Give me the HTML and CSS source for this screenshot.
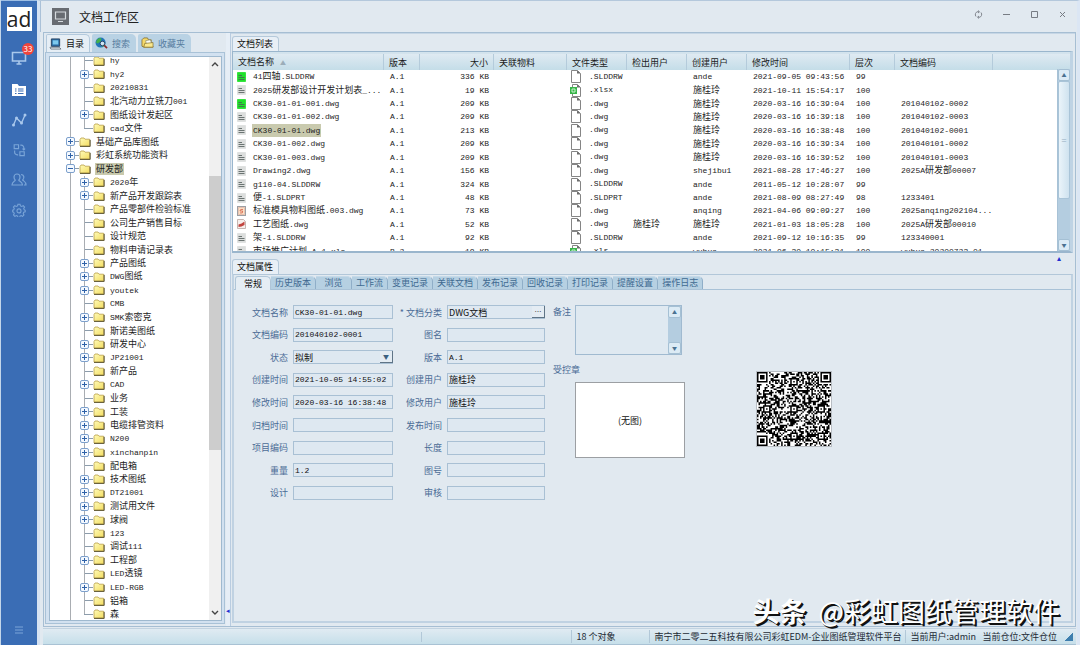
FILE: index.html
```html
<!DOCTYPE html>
<html lang="zh-CN">
<head>
<meta charset="utf-8">
<title>文档工作区</title>
<link rel="stylesheet" href="styles.css">
</head>
<body>
<svg class="defs" aria-hidden="true">
  <defs>
    <linearGradient id="g-folder" x1="0" y1="0" x2="1" y2="1"><stop offset="0" stop-color="#fffbb8"/><stop offset="1" stop-color="#f3dd62"/></linearGradient>
    <symbol id="i-folder" viewBox="0 0 12 10"><path d="M1 9V2.5L2 1h3l1 1.200h4.500V9z" fill="url(#g-folder)" stroke="#b9a04a" stroke-width=".8"/><path d="M1 9.400h10.200V2.800" fill="none" stroke="#5c5430" stroke-width="1"/></symbol>
    <symbol id="i-doc" viewBox="0 0 9 10"><path d="M.5.5h8v9h-8z" fill="currentColor" stroke="currentColor" stroke-width=".8"/><path d="M1.500 3.500h3.500M1.500 5.500h6M1.500 7.500h6" stroke="#4f5a58" stroke-width="1" opacity=".8"/></symbol>
    <symbol id="i-red" viewBox="0 0 9 10"><path d="M.5.500h6l2 2v7h-8z" fill="#f7efec" stroke="#b9a5a0" stroke-width=".8"/><path d="M1.500 5.500l3-1 3-2v3.500l-3 1.500-3 .5z" fill="#c2453f"/></symbol>
    <symbol id="i-stamp" viewBox="0 0 9 10"><path d="M.5.500h8v9h-8z" fill="#fbe3c8" stroke="#d9a28c" stroke-width=".8"/><path d="M6.500 3h-3L2.500 5h3.500l-.5 2.500h-3" fill="none" stroke="#d5573f"/></symbol>
    <symbol id="i-file" viewBox="0 0 11 13"><path d="M1.500.500h6l3 3v9h-9z" fill="#fff" stroke="#858585"/><path d="M7 .5v3h3.500z" fill="#6b6b6b"/></symbol>
    <symbol id="i-xls" viewBox="0 0 11 13"><path d="M2.500.500h5l3 3v9h-8z" fill="#fff" stroke="#858585"/><path d="M7 .5v3h3.500z" fill="#6b6b6b"/><path d="M0 3h7v7H0z" fill="#39b54a"/><path d="M2 5h3v3H2z" fill="none" stroke="#c9f3cd"/></symbol>
  </defs>
</svg>

<div class="app">
  <nav class="rail" aria-label="主导航">
    <div class="logo">ad</div>
    <button class="rail-btn bright" aria-label="消息">
      <svg viewBox="0 0 16 16" width="16" height="16"><path d="M1.500 2.500h13v8.500h-13zM5.500 14h5M8 11v3" fill="none" stroke="currentColor" stroke-width="1.600"/></svg>
      <span class="badge">33</span>
    </button>
    <button class="rail-btn active" aria-label="文档">
      <svg viewBox="0 0 16 16" width="16" height="16"><path d="M1 2h5.500l1.500 2h7v10H1z" fill="currentColor"/><path d="M4 7h1.500M7 7h5.500M4 9h1.500M7 9h5.500M4 11.500h1.500M7 11.500h5.500" stroke="#3a6db5" stroke-width="1.100"/></svg>
    </button>
    <button class="rail-btn bright" aria-label="统计">
      <svg viewBox="0 0 16 16" width="16" height="16"><path d="M2.500 13L5.500 6l5 5L14 3" fill="none" stroke="currentColor" stroke-width="1.300"/><g fill="currentColor"><circle cx="2.500" cy="13" r="1.500"/><circle cx="5.500" cy="6" r="1.500"/><circle cx="10.500" cy="11" r="1.500"/><circle cx="14" cy="3" r="1.500"/></g></svg>
    </button>
    <button class="rail-btn" aria-label="流程">
      <svg viewBox="0 0 16 16" width="14" height="14"><path d="M2.500 2h5v4.500h-5zM9 10h5v4.500H9zM9.500 2.500h1A3 3 0 0 1 13.500 6v2M12 6.500l1.500 1.500L15 6.500M7 13.500H6A3 3 0 0 1 3 10V8.500" fill="none" stroke="currentColor" stroke-width="1.300"/></svg>
    </button>
    <button class="rail-btn" aria-label="用户">
      <svg viewBox="0 0 16 16" width="16" height="16"><path d="M6 2a3 3 0 0 1 3 3c0 1.500-.6 2.500-1.200 3.200.5 1.200 3.700 1.500 3.700 4.800H1c0-3.300 3-3.600 3.300-4.800C3.600 7.500 3 6.500 3 5a3 3 0 0 1 3-3zM10 2.500c3 0 3.800 3.500 1.700 5.500 1 1.200 3.300 1.500 3.300 5h-2" fill="none" stroke="currentColor" stroke-width="1.200"/></svg>
    </button>
    <button class="rail-btn" aria-label="设置">
      <svg viewBox="0 0 16 16" width="14" height="14"><path d="M6.800 1.500h2.400l.4 1.800 1.600.7 1.600-1 1.600 1.700-1 1.500.6 1.600 1.100.5v1.800l-1.700.5-.6 1.500.9 1.600-1.700 1.600-1.500-1-1.300.7-.4 1.500H6.800l-.4-1.500-1.500-.7-1.600 1-1.600-1.600.9-1.600-.6-1.500-1.200-.5V8.200l1.200-.5.6-1.600-1-1.500L3.200 3l1.600 1 1.600-.7z" fill="none" stroke="currentColor" stroke-width="1.200"/><circle cx="8" cy="9" r="2.300" fill="none" stroke="currentColor" stroke-width="1.200"/></svg>
    </button>
    <button class="rail-btn last" aria-label="菜单">
      <svg viewBox="0 0 8 8" width="8" height="8"><path d="M0 1h8M0 4h8M0 7h8" stroke="currentColor"/></svg>
    </button>
  </nav>

  <div class="window">
    <header class="titlebar">
      <svg viewBox="0 0 17 17" width="17" height="17"><path d="M0 0h17v17H0z" fill="#686c72"/><path d="M3.500 4h10v7h-10zM6 13.500h5" fill="none" stroke="#d5dade" stroke-width="1.200"/></svg>
      <h1>文档工作区</h1>
      <div class="winbtns">
        <button aria-label="刷新"><svg viewBox="0 0 9 9" width="9" height="9"><path d="M2 6.500A3 3 0 0 1 4 1.600L5 2M7 2.500A3 3 0 0 1 5 7.400L4 7M4 .5l1.500 1.300L4 3M5 6L3.500 7.200 5 8.500" fill="none" stroke="currentColor" stroke-width=".9"/></svg></button>
        <button aria-label="最小化"><svg viewBox="0 0 9 9" width="9" height="9"><path d="M1 4.500h7" stroke="currentColor"/></svg></button>
        <button aria-label="最大化"><svg viewBox="0 0 9 9" width="9" height="9"><path d="M1.500 1.500h6v6h-6z" fill="none" stroke="currentColor"/></svg></button>
        <button aria-label="关闭"><svg viewBox="0 0 9 9" width="9" height="9"><path d="M2 2l5 5M7 2L2 7" stroke="currentColor"/></svg></button>
      </div>
    </header>

    <main class="workspace">
      <section class="browser">
        <div class="side-tabs" role="tablist">
          <button class="side-tab on" role="tab" aria-selected="true"><svg viewBox="0 0 14 13" width="13" height="12"><path d="M2.500 1h9v8h-9z" fill="#2b6fa8" stroke="#24405f"/><path d="M4 2.500h6v4.500H4z" fill="#7cc9ee"/><path d="M1 10h10l2 2H2z" fill="#e9edf2" stroke="#53606e" stroke-width=".8"/></svg>目录</button>
          <button class="side-tab" role="tab" aria-selected="false"><svg viewBox="0 0 14 13" width="13" height="12"><circle cx="6" cy="6" r="5.500" fill="#2277b8"/><path d="M2 3q3-3 5-1L6 5 3 7 1 6zM7 8l3-2 1 2-3 3z" fill="#43b04b"/><circle cx="8" cy="7" r="2.500" fill="#cfe6f6" stroke="#24405f"/><path d="M10 9l3 3" stroke="#8c2a2a" stroke-width="1.800"/></svg>搜索</button>
          <button class="side-tab" role="tab" aria-selected="false"><svg viewBox="0 0 14 13" width="13" height="12"><path d="M1 10V3l2-2h4l1 2h3v2l2 6H3z" fill="#f5d96a" stroke="#7a6426" stroke-width=".8"/><path d="M5 4l5-1 2 5-6 1z" fill="#fdfdf3" stroke="#8b8b70" stroke-width=".7"/><path d="M3 11l1-4 9-1v5z" fill="#fbe98d" stroke="#7a6426" stroke-width=".7"/></svg>收藏夹</button>
        </div>
        <div class="tree-frame">
          <div class="tree-box">
            <ul class="tree" id="tree"></ul>
            <div class="tree-scroll">
              <svg viewBox="0 0 8 6" width="8" height="6"><path d="M1 5l3-3 3 3" fill="none" stroke="#444" stroke-width="1.400"/></svg>
              <div class="tree-thumb"></div>
              <svg viewBox="0 0 8 6" width="8" height="6"><path d="M1 1l3 3 3-3" fill="none" stroke="#444" stroke-width="1.400"/></svg>
            </div>
          </div>
        </div>
      </section>

      <div class="splitter"><span>◂</span></div>

      <div class="content">
        <section class="panel">
          <h2 class="panel-tab">文档列表</h2>
          <div class="list-frame">
            <table class="docs">
              <colgroup>
                <col class="c-name"><col class="c-ver"><col class="c-size"><col class="c-rel"><col class="c-user"><col class="c-user"><col class="c-user"><col class="c-time"><col class="c-lvl"><col class="c-code"><col>
              </colgroup>
              <thead>
                <tr><th>文档名称<span class="sort">▲</span></th><th>版本</th><th class="num">大小</th><th>关联物料</th><th>文件类型</th><th>检出用户</th><th>创建用户</th><th>修改时间</th><th>层次</th><th>文档编码</th><th></th></tr>
              </thead>
              <tbody id="docs"></tbody>
            </table>
            <div class="vscroll">
              <button aria-label="向上">▲</button>
              <div class="vthumb">=</div>
              <button aria-label="向下">▼</button>
            </div>
          </div>
        </section>

        <div class="hsplit"><span>▴</span></div>

        <section class="panel grow">
          <h2 class="panel-tab">文档属性</h2>
          <div class="props">
            <div class="prop-tabs" role="tablist">
              <button class="on" role="tab" aria-selected="true">常规</button><button role="tab">历史版本</button><button role="tab">浏览</button><button role="tab">工作流</button><button role="tab">变更记录</button><button role="tab">关联文档</button><button role="tab">发布记录</button><button role="tab">回收记录</button><button role="tab">打印记录</button><button role="tab">提醒设置</button><button role="tab">操作日志</button>
            </div>
            <form class="prop-body">
              <div class="fields">
                <label for="f1">文档名称</label><input id="f1" class="mono" value="CK30-01-01.dwg">
                <label for="f2">* 文档分类</label><div class="combo"><input id="f2" value="DWG文档"><button type="button" aria-label="选择分类">…</button></div>
                <label for="f3">文档编码</label><input id="f3" class="mono" value="201040102-0001">
                <label for="f4">图名</label><input id="f4">
                <label for="f5">状态</label><div class="combo"><select id="f5"><option>拟制</option></select><span class="drop" aria-hidden="true">▼</span></div>
                <label for="f6">版本</label><input id="f6" class="mono" value="A.1">
                <label for="f7">创建时间</label><input id="f7" class="mono" value="2021-10-05 14:55:02">
                <label for="f8">创建用户</label><input id="f8" value="施桂玲">
                <label for="f9">修改时间</label><input id="f9" class="mono" value="2020-03-16 16:38:48">
                <label for="f10">修改用户</label><input id="f10" value="施桂玲">
                <label for="f11">归档时间</label><input id="f11">
                <label for="f12">发布时间</label><input id="f12">
                <label for="f13">项目编码</label><input id="f13">
                <label for="f14">长度</label><input id="f14">
                <label for="f15">重量</label><input id="f15" class="mono" value="1.2">
                <label for="f16">图号</label><input id="f16">
                <label for="f17">设计</label><input id="f17">
                <label for="f18">审核</label><input id="f18">
              </div>
              <div class="notes">
                <label for="memo">备注</label>
                <div class="memo"><textarea id="memo"></textarea><div class="memo-scroll"><button type="button" aria-label="向上">▲</button><button type="button" aria-label="向下">▼</button></div></div>
                <span class="stamp-label">受控章</span>
                <div class="stamp">(无图)</div>
              </div>
              <svg class="qr" id="qr" viewBox="0 0 49 49" role="img" aria-label="二维码"></svg>
            </form>
          </div>
        </section>
      </div>
    </main>

    <footer class="status">
      <span class="s-blank"></span>
      <span class="s-count">18 个对象</span>
      <span class="s-company">南宁市二零二五科技有限公司彩虹EDM-企业图纸管理软件平台</span>
      <span class="s-user">当前用户:admin</span>
      <span class="s-store">当前仓位:文件仓位</span>
      <i class="grip"></i>
    </footer>
  </div>
  <div class="watermark"><b>头条</b>@彩虹图纸管理软件</div>
</div>
<script src="app.js"></script>
</body>
</html>
```
FILE: styles.css
```css
* { box-sizing: border-box; }
body { margin: 0; font: 9px/13px "Noto Sans CJK SC", "Liberation Sans", sans-serif; color: #1c1c1c; background: #e1e9f0; }
button, input, select, textarea { font: inherit; color: inherit; margin: 0; padding: 0; border: 0; background: none; border-radius: 0; }
h1, h2, ul { margin: 0; padding: 0; font-weight: 400; }
.defs { position: absolute; width: 0; height: 0; }
.mono { font-family: "Liberation Mono", "Noto Sans CJK SC", monospace; font-size: 8px; }

.app { position: relative; display: flex; height: 100vh; min-height: 640px; border-left: 1px solid #c3d6ea; overflow: hidden; }

/* left rail */
.rail { display: flex; flex-direction: column; align-items: center; flex: 0 0 36px; background: #3a6db5; padding: 6px 0 9px; color: #7aa5d8; border-top: 1px solid #9fbfe4; }
.logo { width: 25px; height: 24px; background: #fff; color: #222; font: 21px/25px "Open Sans", "Noto Sans", sans-serif; text-align: center; margin-bottom: 12px; }
.rail-btn { position: relative; display: flex; align-items: center; justify-content: center; width: 30px; height: 30px; color: inherit; }
.rail-btn.bright { color: #a9c8ec; }
.rail-btn.active { color: #fff; margin-top: 2px; }
.rail-btn.bright + .rail-btn { margin-bottom: 0; }
.rail-btn.last { margin-top: auto; height: 12px; }
.badge { position: absolute; right: 0; top: 0; width: 12px; height: 12px; border-radius: 6px; background: #f0443c; color: #fff; font-size: 8px; line-height: 12px; text-align: center; }

.window { flex: 1; display: flex; flex-direction: column; min-width: 0; border-left: 3px solid #d5e2f2; border-right: 3px solid #dbe6f4; border-top: 1px solid #b4c8dc; }
.titlebar { display: flex; align-items: center; gap: 10px; height: 31px; flex: none; padding: 0 10px 0 11px; border-left: 1px solid #aac1d8; }
.titlebar h1 { font-size: 12px; line-height: 18px; color: #222; }
.winbtns { display: flex; gap: 19px; margin-left: auto; color: #777c84; padding-bottom: 4px; }
.winbtns button { display: flex; }

.workspace { flex: 1; min-height: 0; display: flex; margin: 0 1px 0 3px; border: 1px solid #a6bed3; }

/* folder browser */
.browser { flex: 0 0 182px; display: flex; flex-direction: column; padding: 1px 1px 2px 1px; }
.side-tabs { display: flex; gap: 2px; padding-left: 1px; height: 18px; }
.side-tab { display: flex; align-items: center; gap: 4px; padding: 0 6px 0 3px; border-radius: 2px 5px 0 0; background: #b9d2e4; color: #567c9e; }
.side-tab.on { background: #e6eef5; color: #111; border: 1px solid #b3c9dc; border-bottom: 0; padding: 0 5px 0 2px; }
.tree-frame { flex: 1; min-height: 0; border: 1px solid #a9c2d7; background: #d2e1f0; padding: 3px 2px 2px 3px; display: flex; }
.tree-box { flex: 1; display: flex; overflow: hidden; background: #fff; border: 1px solid #9fb9cf; }
.tree { flex: 1; margin: -3px 0 -1px; list-style: none; display: grid; grid-auto-rows: 1fr; background: linear-gradient(#a9adb2, #a9adb2) 20px 0 / 1px 100% no-repeat; }
.tree li { position: relative; display: flex; align-items: center; gap: 4px; padding-left: 29px; white-space: nowrap; min-height: 0; }
.tree li.root { padding-left: 15px; }
.tree li::before { content: ""; width: 9px; height: 1px; background: #8c9cab; flex: none; margin-left: 5px; margin-right: -4px; }
.tree li::after { content: ""; position: absolute; left: 34px; top: 0; bottom: 0; width: 1px; background: #a9adb2; }
.tree li.root::after { display: none; }
.tree li.end::after { bottom: 50%; }
.tree li svg { width: 12px; height: 10px; flex: none; }
.tree i { position: absolute; z-index: 1; left: 30px; top: 2px; width: 9px; height: 9px; border: 1px solid #7da0cc; border-radius: 2px; background: linear-gradient(#2f62a8, #2f62a8) 50% 50% / 5px 1px no-repeat, linear-gradient(#2f62a8, #2f62a8) 50% 50% / 1px 5px no-repeat, #f4f9ff; }
.tree li.root i { left: 16px; }
.tree i.open { background: linear-gradient(#2f62a8, #2f62a8) 50% 50% / 5px 1px no-repeat, #f4f9ff; }
.tree b, .docs b { font-weight: 400; padding: 0 1px; line-height: 12px; }
.tree b.sel, .docs b.sel { background: #c9caae; }
.tree-scroll { flex: 0 0 12px; background: #f0f0f0; display: flex; flex-direction: column; align-items: center; padding: 4px 0; }
.tree-scroll::before { content: ""; order: 1; height: 109px; flex: none; }
.tree-thumb { order: 2; width: 12px; flex: 0 0 274px; background: #cdcdcd; }
.tree-scroll svg:last-child { order: 3; margin-top: auto; }

.splitter { flex: 0 0 5px; display: flex; align-items: flex-end; padding-bottom: 11px; color: #1f2fd0; border-right: 1px solid #b9cce0; background: #e6eef6; }
.splitter span { font-size: 7px; line-height: 10px; }

/* right column */
.content { flex: 1; min-width: 0; display: flex; flex-direction: column; padding: 2px 2px 2px 1px; border-top: 1px solid #c6d6e5; }
.panel { display: flex; flex-direction: column; }
.grow { flex: 1; min-height: 0; }
.panel-tab { align-self: flex-start; font-size: 9px; line-height: 14px; padding: 0 5px 0 4px; color: #111; background: #e8eff6; border: 1px solid #b5c9da; border-bottom: 0; border-radius: 3px 4px 0 0; }
.list-frame { position: relative; height: 202px; overflow: hidden; border: 1px solid #9ab6cd; border-right-width: 3px; border-right-color: #bfd3e4; border-bottom: 2px solid #9ab6cd; background: #d3e3ed; padding-top: 2px; }
.docs { width: 100%; height: 204px; border-collapse: separate; border-spacing: 0; table-layout: fixed; background: #fff; }
.c-name { width: 151px; } .c-ver { width: 36px; } .c-size { width: 74px; } .c-rel { width: 73px; } .c-user { width: 60px; } .c-time { width: 103px; } .c-lvl { width: 45px; } .c-code { width: 98px; }
.docs th { height: 15px; padding: 0 0 0 5px; text-align: left; font-weight: 400; line-height: 15px; white-space: nowrap; background: linear-gradient(#dfeaf2, #c4dde8); border-right: 1px solid #b4cbdb; overflow: hidden; }
.docs th:last-child { border: 0; }
.docs th.num, .docs td.num { text-align: right; padding-right: 5px; }
.docs td { padding: 0 0 0 6px; line-height: 12px; white-space: nowrap; overflow: hidden; vertical-align: middle; }
.docs tr > td:nth-child(5) { padding-left: 3px; }
.sort { font-size: 6px; color: #9badb9; margin-left: 6px; }
.cell { display: flex; align-items: center; height: 12px; gap: 6px; }
.cell svg { width: 9px; height: 10px; flex: none; color: #dcdedd; margin-left: -2px; }
.cell svg.green { color: #20e02b; }
.cell.type { gap: 8px; }
.cell.type svg { width: 11px; height: 13px; margin-left: 0; }
.vscroll { position: absolute; right: 0; top: 17px; bottom: 0; width: 13px; display: flex; flex-direction: column; background: #b4cde0; border-left: 1px solid #a8c2d6; }
.vscroll button, .memo-scroll button { height: 12px; flex: none; font-size: 5px; line-height: 10px; color: #4b7291; background: #dcebf5; border: 1px solid #a5c0d4; border-radius: 2px; text-align: center; }
.vscroll button:last-child { margin-top: auto; }
.vthumb { flex: 0 0 118px; display: flex; align-items: center; justify-content: center; background: linear-gradient(90deg, #eaf4fa, #cfe2ef); border: 1px solid #a9c4d8; color: #92acc0; border-radius: 2px; }

.hsplit { height: 6px; flex: none; display: flex; justify-content: flex-end; padding-right: 12px; color: #1f2fd0; }
.hsplit span { font-size: 8px; line-height: 9px; }

/* properties */
.props { flex: 1; display: flex; flex-direction: column; min-height: 0; border: 2px solid #c0d2e2; border-top: 1px solid #b2c7d9; margin-bottom: 1px; }
.prop-tabs { display: flex; height: 15px; padding: 1px 0 0 1px; border-bottom: 1px solid #a9c2d7; }
.prop-tabs button { min-width: 36px; padding: 0 4px; line-height: 12px; height: 13px; background: #b6d0e2; color: #3f6a91; border-right: 1px solid #8faec8; border-top: 1px solid #c5d9e8; border-radius: 0 5px 0 0; }
.prop-tabs button.on { background: #e5edf4; color: #111; height: 14px; border: 1px solid #b0c6d8; border-bottom: 0; border-radius: 3px 5px 0 0; }
.prop-body { display: flex; align-items: flex-start; padding: 11px 8px 0 0; color: #4b6c96; background: #e1e9f0; flex: 1; }
.fields { display: grid; grid-template-columns: 54px 100px 44px 98px; column-gap: 5px; grid-auto-rows: 1fr; height: 203px; align-items: center; justify-items: end; }
.fields label { white-space: nowrap; }
.fields input, .fields select { width: 100%; height: 14px; padding: 0 1px; border: 1px solid #a9c0d4; background: #dee8f1; color: #111; }
.combo { width: 100%; display: flex; position: relative; }
.fields select { appearance: none; }
.combo button, .drop { position: absolute; right: 0; top: 1px; width: 13px; height: 12px; background: #e4ecf3; border-right: 1px solid #5f7486; border-bottom: 1px solid #5f7486; color: #333; font-size: 7px; line-height: 9px; text-align: center; pointer-events: none; }
.drop { font-size: 6px; line-height: 11px; color: #3c6080; }
.notes { display: grid; grid-template-columns: 18px 110px; column-gap: 4px; margin-left: 8px; margin-top: 4px; align-items: start; white-space: nowrap; }
.memo { display: flex; width: 107px; height: 50px; border: 1px solid #a0bad0; background: #dfe9f1; }
.memo textarea { flex: 1; width: 0; resize: none; outline: 0; }
.memo-scroll { width: 13px; background: #b4cde0; display: flex; flex-direction: column; justify-content: space-between; }
.stamp-label { grid-column: 1 / 3; margin-top: 8px; margin-bottom: 6px; }
.stamp { grid-column: 2; height: 76px; display: flex; align-items: center; justify-content: center; background: #fff; border: 1px solid #9c9fa3; color: #111; }
.qr { width: 76px; height: 76px; margin: 70px 0 0 71px; background: #fff; border: 1px solid #b9bec4; flex: none; }

.status { flex: none; height: 17px; margin: 1px 1px 0 3px; display: flex; align-items: center; background: linear-gradient(#e0ebf2, #c6dfea); border-top: 1px solid #c2d3e1; border-bottom: 1px solid #a9c2d4; white-space: nowrap; color: #1d2a35; }
.status span { border-left: 1px solid #b2c8d8; padding-left: 4px; }
.status .s-blank { flex: 1; max-width: 150px; margin-left: auto; height: 10px; }
.status .s-count { width: 78px; }
.status .s-company { width: 256px; }
.status .s-user { width: 77px; }
.status .s-store { border: 0; padding: 0 8px 0 0; }
.grip { width: 8px; height: 8px; margin-right: 3px; background: linear-gradient(135deg, transparent 50%, #3f7fae 50%); }

.watermark { position: absolute; right: 20px; bottom: 15px; font-size: 27px; line-height: 38px; color: #fff; white-space: nowrap; text-shadow: 1px 1px 0 #111, 2px 2px 0 #111; }
.watermark b { margin-right: 12px; }
```
FILE: app.js
```js
const escapeCjk = /([\u3400-\u9fff]+)/;

/* Latin runs use the monospaced face, Chinese runs the page face. */
function mix(text) {
  return text.split(escapeCjk).filter(Boolean)
    .map(run => escapeCjk.test(run) ? run : `<span class="mono">${run}</span>`).join('');
}

/* flags: + collapsed branch, - open branch, r top level, e end of branch, s selected */
const folders = [
  ['hy', ''], ['hy2', '+'], ['20210831', ''], ['北汽动力立铣刀001', ''], ['图纸设计发起区', '+'], ['cad文件', 'e'],
  ['基础产品库图纸', 'r+'], ['彩虹系统功能资料', 'r+'], ['研发部', 'r-s'], ['2020年', '+'], ['新产品开发跟踪表', '+'],
  ['产品零部件检验标准', ''], ['公司生产销售目标', ''], ['设计规范', ''], ['物料申请记录表', ''], ['产品图纸', '+'],
  ['DWG图纸', '+'], ['youtek', '+'], ['CMB', ''], ['SMK索密克', '+'], ['斯诺美图纸', ''], ['研发中心', '+'],
  ['JP21001', '+'], ['新产品', ''], ['CAD', '+'], ['业务', ''], ['工装', '+'], ['电缆排管资料', '+'], ['N200', '+'],
  ['xinchanpin', '+'], ['配电箱', ''], ['技术图纸', '+'], ['DT21001', '+'], ['测试用文件', '+'], ['球阀', '+'],
  ['123', ''], ['调试111', ''], ['工程部', '+'], ['LED透镜', ''], ['LED-RGB', '+'], ['铝箱', ''], ['森', 'e']
];
document.getElementById('tree').innerHTML = folders.map(([name, f]) => {
  const cls = (f.includes('r') ? 'root ' : '') + (f.includes('e') ? 'end' : '');
  const box = f.includes('+') ? '<i></i>' : f.includes('-') ? '<i class="open"></i>' : '';
  return `<li class="${cls}">${box}<svg><use href="#i-folder"/></svg><b class="${f.includes('s') ? 'sel' : ''}">${mix(name)}</b></li>`;
}).join('');

const docs = [
  ['green', '41四轴.SLDDRW', 'A.1', '336 KB', '.SLDDRW', '', 'ande', '2021-09-05 09:43:56', '99', ''],
  ['', '2025研发部设计开发计划表_...', 'A.1', '19 KB', '.xlsx', '', '施桂玲', '2021-10-11 15:54:17', '100', ''],
  ['green', 'CK30-01-01-001.dwg', 'A.1', '209 KB', '.dwg', '', '施桂玲', '2020-03-16 16:39:04', '100', '201040102-0002'],
  ['', 'CK30-01-01-002.dwg', 'A.1', '209 KB', '.dwg', '', '施桂玲', '2020-03-16 16:39:18', '100', '201040102-0003'],
  ['', 'CK30-01-01.dwg', 'A.1', '213 KB', '.dwg', '', '施桂玲', '2020-03-16 16:38:48', '100', '201040102-0001'],
  ['', 'CK30-01-002.dwg', 'A.1', '209 KB', '.dwg', '', '施桂玲', '2020-03-16 16:39:34', '100', '201040101-0002'],
  ['', 'CK30-01-003.dwg', 'A.1', '209 KB', '.dwg', '', '施桂玲', '2020-03-16 16:39:52', '100', '201040101-0003'],
  ['', 'Drawing2.dwg', 'A.1', '156 KB', '.dwg', '', 'shejibu1', '2021-08-28 17:46:27', '100', '2025A研发部00007'],
  ['', 'g110-04.SLDDRW', 'A.1', '324 KB', '.SLDDRW', '', 'ande', '2011-05-12 10:28:07', '99', ''],
  ['', '便-1.SLDPRT', 'A.1', '48 KB', '.SLDPRT', '', 'ande', '2021-08-09 08:27:49', '98', '1233401'],
  ['stamp', '标准模具物料图纸.003.dwg', 'A.1', '73 KB', '.dwg', '', 'anqing', '2021-04-06 09:09:27', '100', '2025anqing202104...'],
  ['red', '工艺图纸.dwg', 'A.1', '52 KB', '.dwg', '施桂玲', '施桂玲', '2021-01-03 18:05:28', '100', '2025A研发部00010'],
  ['', '架-1.SLDDRW', 'A.1', '92 KB', '.SLDDRW', '', 'ande', '2021-09-12 10:16:35', '99', '123340001'],
  ['', '市场推广计划.A.1.xls', 'B.2', '19 KB', '.xls', '', 'wuhua', '2021-06-30 10:15:31', '100', 'wuhua-20200723-01']
];
document.getElementById('docs').innerHTML = docs.map(([icon, name, ver, size, type, out, user, time, level, code]) => {
  const id = icon === 'red' || icon === 'stamp' ? icon : 'doc';
  const file = type.startsWith('.xls') ? 'xls' : 'file';
  const sel = name === 'CK30-01-01.dwg' ? 'sel' : '';
  return `<tr><td><div class="cell"><svg class="${icon}"><use href="#i-${id}"/></svg><b class="${sel}">${mix(name)}</b></div></td>
    <td>${mix(ver)}</td><td class="num">${mix(size)}</td><td></td>
    <td><div class="cell type"><svg><use href="#i-${file}"/></svg>${mix(type)}</div></td>
    <td>${mix(out)}</td><td>${mix(user)}</td><td>${mix(time)}</td><td>${mix(level)}</td><td>${mix(code)}</td><td></td></tr>`;
}).join('');

/* QR code, 49 modules per side */
const size = 49;
let seed = 20217;
const random = () => (seed = (seed * 1103515245 + 12345) % 2147483648) / 2147483648;
const grid = Array.from({ length: size }, () => Array.from({ length: size }, () => random() < 0.5));
function rings(cx, cy, reach, white) {
  for (let y = cy - reach; y <= cy + reach; y++) for (let x = cx - reach; x <= cx + reach; x++) {
    if (x < 0 || y < 0 || x >= size || y >= size) continue;
    grid[y][x] = !white.includes(Math.max(Math.abs(x - cx), Math.abs(y - cy)));
  }
}
for (let i = 0; i < size; i++) grid[6][i] = grid[i][6] = i % 2 === 0;
[[24, 6], [6, 24], [24, 24], [42, 24], [24, 42], [42, 42]].forEach(([x, y]) => rings(x, y, 2, [1]));
[[3, 3], [45, 3], [3, 45]].forEach(([x, y]) => rings(x, y, 4, [2, 4]));
let path = '';
grid.forEach((row, y) => row.forEach((on, x) => { if (on) path += `M${x} ${y}h1v1h-1z`; }));
document.getElementById('qr').innerHTML = `<path d="${path}" fill="#000"/>`;
```
